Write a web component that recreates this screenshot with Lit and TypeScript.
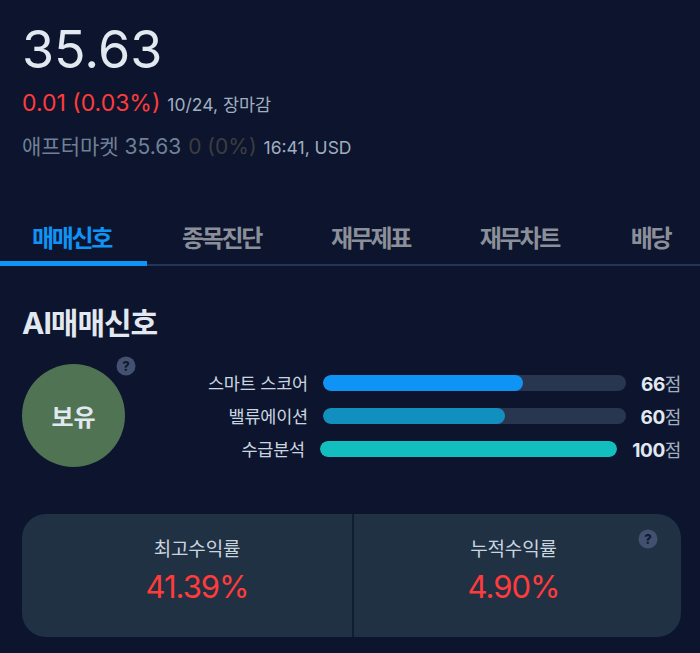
import { LitElement, html, css } from "lit";
import { customElement } from "lit/decorators.js";

const help = html`<svg class="help-svg" viewBox="0 0 20 20" width="20" height="20" aria-hidden="true">
  <circle cx="10" cy="10" r="9.5" fill="#44506f"></circle>
  <text x="10" y="14.6" text-anchor="middle" font-size="13" font-weight="800" fill="#0f1a30" font-family="Inter, sans-serif">?</text>
</svg>`;

@customElement("app-root")
export class AppRoot extends LitElement {
  static styles = css`
    :host {
      display: block;
      width: 700px;
      height: 653px;
      overflow: hidden;
      background: #0c152d;
      font-family: Inter, "Noto Sans CJK KR", sans-serif;
      color: #e2e8f0;
    }
    .quote { padding: 20px 22px 0 22px; }
    .price { font-size: 52px; line-height: 60px; color: #e2e8f0; }
    .row { display: flex; align-items: baseline; white-space: nowrap; }
    .change-row { margin-top: 9px; height: 34px; gap: 7px; }
    .change { font-size: 23px; color: #ff3b3b; }
    .meta { font-size: 17.5px; color: #a0aec0; }
    .after-row { margin-top: 7px; height: 34px; font-size: 21px; color: #718096; }
    .after-flat { color: #3d3d40; margin-left: 7px; }
    .after-row .meta { margin-left: 7px; }
    .tabs {
      display: flex;
      margin-top: 53px;
      height: 49px;
      box-shadow: inset 0 -2px 0 #22365a;
      white-space: nowrap;
      overflow: hidden;
    }
    .tab {
      flex: none;
      padding: 0 34.9px;
      height: 44px;
      font-size: 24px;
      font-weight: 700;
      line-height: 43px;
      letter-spacing: -2.3px;
      color: #8b8f99;
    }
    .tab.active {
      padding: 0 36px 0 32px;
      color: #0f93f5;
      border-bottom: 5px solid #0f93f5;
    }
    .tab.last { margin-left: 2px; }
    .section { padding: 0 19px 0 22px; }
    h2 {
      margin: 0;
      padding-top: 37px;
      font-size: 30px;
      line-height: 40px;
      font-weight: 700;
      letter-spacing: -1px;
      color: #e2e8f0;
    }
    .signal { display: flex; margin-top: 21px; height: 103px; }
    .badge-wrap { position: relative; width: 103px; height: 103px; flex: none; }
    .badge {
      width: 103px;
      height: 103px;
      border-radius: 50%;
      background: #4f7353;
      display: flex;
      align-items: center;
      justify-content: center;
      font-size: 24px;
      font-weight: 700;
      color: #e2e8f0;
    }
    .help { position: absolute; display: block; line-height: 0; }
    .badge-wrap .help { left: 94px; top: -8px; }
    .scores {
      flex: 1;
      display: flex;
      flex-direction: column;
      gap: 8px;
      margin-top: 6px;
    }
    .score { display: flex; align-items: center; height: 25px; justify-content: flex-end; }
    .label { font-size: 17.5px; color: #cbd5e0; white-space: nowrap; margin-right: 15px; letter-spacing: -0.2px; }
    .track { width: 303px; height: 16px; border-radius: 8px; background: #29364f; overflow: hidden; flex: none; }
    .fill { height: 100%; border-radius: 8px; }
    .num { width: 55px; text-align: right; white-space: nowrap; font-size: 19px; font-weight: 700; color: #e2e8f0; letter-spacing: -0.4px; flex: none; }
    .num span { font-weight: 400; color: #a0aec0; font-size: 18px; }
    .score.full .track { width: 297px; }
    .score.full .num { width: 64px; }
    .returns {
      display: flex;
      margin-top: 47px;
      height: 123px;
      border-radius: 24px;
      background: #1f3143;
      position: relative;
    }
    .ret { box-sizing: border-box; text-align: center; padding-top: 24px; }
    .ret.first { flex: 0 0 330px; padding-left: 20px; }
    .ret.second { flex: 1; padding-right: 8px; border-left: 2px solid #111d33; }
    .ret-label { font-size: 19px; line-height: 24px; color: #cbd5e0; letter-spacing: -0.2px; }
    .ret-value { font-size: 31px; line-height: 40px; margin-top: 5px; color: #ff3b3b; letter-spacing: -1px; }
    .returns .help { right: 23px; top: 15px; }
  `;

  render() {
    const scores = [
      { label: "스마트 스코어", v: 66, color: "#0f93f5" },
      { label: "밸류에이션", v: 60, color: "#118fbe" },
      { label: "수급분석", v: 100, color: "#13bebf", full: true },
    ];
    return html`
      <div class="quote">
        <div class="price">35.63</div>
        <div class="row change-row">
          <span class="change">0.01 (0.03%)</span>
          <span class="meta">10/24, 장마감</span>
        </div>
        <div class="row after-row">
          <span>애프터마켓 35.63</span>
          <span class="after-flat">0 (0%)</span>
          <span class="meta">16:41, USD</span>
        </div>
      </div>
      <nav class="tabs">
        <div class="tab active">매매신호</div>
        <div class="tab">종목진단</div>
        <div class="tab">재무제표</div>
        <div class="tab">재무차트</div>
        <div class="tab last">배당</div>
      </nav>
      <section class="section">
        <h2>AI매매신호</h2>
        <div class="signal">
          <div class="badge-wrap">
            <div class="badge">보유</div>
            <span class="help">${help}</span>
          </div>
          <div class="scores">
            ${scores.map(
              (s) => html`<div class="score ${s.full ? "full" : ""}">
                <span class="label">${s.label}</span>
                <div class="track"><div class="fill" style="width:${s.v}%;background:${s.color}"></div></div>
                <span class="num">${s.v}<span>점</span></span>
              </div>`
            )}
          </div>
        </div>
        <div class="returns">
          <div class="ret first">
            <div class="ret-label">최고수익률</div>
            <div class="ret-value">41.39%</div>
          </div>
          <div class="ret second">
            <div class="ret-label">누적수익률</div>
            <div class="ret-value">4.90%</div>
          </div>
          <span class="help">${help}</span>
        </div>
      </section>
    `;
  }
}
